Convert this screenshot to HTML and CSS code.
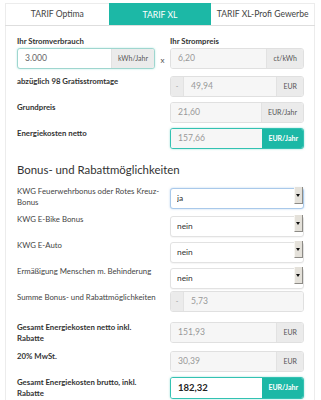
FILE: index.html
```html
<!DOCTYPE html>
<html>

	<head>
		<meta charset="UTF-8">
		<title>Tarifrechner</title>
		<link rel="stylesheet" href="styles.css">
	</head>

	<body>

		<div class="wrap">
			<div class="tabs">
				<div class="tab">TARIF Optima</div>
				<div class="tab active">TARIF XL</div>
				<div class="tab">TARIF XL-Profi Gewerbe</div>
			</div>

			<div class="card">
				<div class="top">
					<div class="lbl b">Ihr Stromverbrauch</div>
					<div></div>
					<div class="lbl b">Ihr Strompreis</div>

					<div class="ig focus">
						<div class="val dark">3.000</div>
						<div class="add">kWh/Jahr</div>
					</div>
					<div class="times">x</div>
					<div class="ig ro">
						<div class="val">6,20</div>
						<div class="add">ct/kWh</div>
					</div>
				</div>

				<div class="row">
					<div class="lbl b">abzüglich 98 Gratisstromtage</div>
					<div class="ig ro">
						<div class="pre">-</div>
						<div class="val">49,94</div>
						<div class="add">EUR</div>
					</div>
				</div>

				<div class="row">
					<div class="lbl b">Grundpreis</div>
					<div class="ig ro">
						<div class="val">21,60</div>
						<div class="add">EUR/Jahr</div>
					</div>
				</div>

				<div class="row">
					<div class="lbl b">Energiekosten netto</div>
					<div class="ig ro teal">
						<div class="val">157,66</div>
						<div class="add">EUR/Jahr</div>
					</div>
				</div>

				<h3>Bonus- und Rabattmöglichkeiten</h3>

				<div class="row first">
					<div class="lbl">KWG Feuerwehrbonus oder Rotes Kreuz-Bonus</div>
					<div class="sel focus">
						<select><option>ja</option><option>nein</option></select>
						<span class="arrow"></span>
					</div>
				</div>

				<div class="row">
					<div class="lbl">KWG E-Bike Bonus</div>
					<div class="sel">
						<select><option>nein</option><option>ja</option></select>
						<span class="arrow"></span>
					</div>
				</div>

				<div class="row">
					<div class="lbl">KWG E-Auto</div>
					<div class="sel">
						<select><option>nein</option><option>ja</option></select>
						<span class="arrow"></span>
					</div>
				</div>

				<div class="row">
					<div class="lbl">Ermäßigung Menschen m. Behinderung</div>
					<div class="sel">
						<select><option>nein</option><option>ja</option></select>
						<span class="arrow"></span>
					</div>
				</div>

				<div class="row">
					<div class="lbl">Summe Bonus- und Rabattmöglichkeiten</div>
					<div class="ig ro">
						<div class="pre">-</div>
						<div class="val">5,73</div>
					</div>
				</div>

				<div class="row sum1">
					<div class="lbl b">Gesamt Energiekosten netto inkl. Rabatte</div>
					<div class="ig ro">
						<div class="val">151,93</div>
						<div class="add">EUR</div>
					</div>
				</div>

				<div class="row sum2">
					<div class="lbl b">20% MwSt.</div>
					<div class="ig ro">
						<div class="val">30,39</div>
						<div class="add">EUR</div>
					</div>
				</div>

				<div class="row">
					<div class="lbl b">Gesamt Energiekosten brutto, inkl. Rabatte</div>
					<div class="ig teal total">
						<div class="val">182,32</div>
						<div class="add">EUR/Jahr</div>
					</div>
				</div>
			</div>
		</div>

	</body>

</html>
```

FILE: styles.css
```css
body {
	margin: 0;
	background-color: #fff;
	font-family: Lato, "Liberation Sans", sans-serif;
	color: #333;
}

.wrap {
	margin: 3px 6px 0 5px;
}

.tabs {
	display: flex;
	height: 22px;
	border-bottom: 1px solid #dedede;
}

.tab {
	flex: 1;
	text-align: center;
	line-height: 21px;
	font-size: 8.6px;
	color: #444;
	border-top: 1px solid #ececec;
}

.tab:first-child {
	border-left: 1px solid #ececec;
}

.tab:last-child {
	border-right: 1px solid #ececec;
}

.tab.active {
	background-color: #1cb8a6;
	border-top-color: #1cb8a6;
	color: #fff;
	line-height: 22px;
}

.card {
	border: 1px solid #ececec;
	border-top: 0;
	padding: 10px 10px 6px 11px;
}

.top {
	display: grid;
	grid-template-columns: 138px 15px 134px;
	row-gap: 1px;
}

.lbl {
	font-size: 7.8px;
	line-height: 11px;
	color: #444;
	padding-top: 1px;
	padding-right: 6px;
}

.lbl.b {
	font-weight: bold;
	color: #333;
	padding-top: 0;
	padding-right: 14px;
}

.times {
	font-size: 8px;
	color: #555;
	text-align: center;
	line-height: 21px;
	padding-top: 2px;
}

.row {
	display: grid;
	grid-template-columns: 1fr 134px;
	margin-top: 5px;
}

.row.first {
	margin-top: 0;
}

.row.sum1 {
	margin-top: 10px;
}

.row.sum2 {
	margin-top: 7px;
}

.ig {
	display: flex;
	height: 21px;
	box-sizing: border-box;
	border: 1px solid #e0e0e0;
	border-radius: 3px;
	overflow: hidden;
	background-color: #fff;
}

.ig .val {
	flex: 1;
	padding-left: 7px;
	font-size: 8.6px;
	line-height: 19px;
	color: #999;
}

.ig .val.dark {
	color: #666;
}

.ig.ro .val {
	background-color: #f6f6f6;
}

.ig .add,
.ig .pre {
	background-color: #ebebeb;
	color: #555;
	font-size: 7px;
	line-height: 19px;
	padding: 0 6px;
}

.ig .add {
	border-left: 1px solid #e2e2e2;
}

.ig .pre {
	padding: 0 4px;
	width: 4px;
	text-align: center;
	color: #999;
	border-right: 1px solid #e2e2e2;
}

.ig.focus {
	border-color: #9fd6cf;
	box-shadow: 0 0 2px rgba(28, 184, 166, 0.35);
}

.ig.teal {
	border-color: #33c2b2;
	box-shadow: 0 0 2px rgba(28, 184, 166, 0.5);
}

.ig.teal .add {
	background-color: #1cb8a6;
	border-left-color: #1cb8a6;
	color: #fff;
	font-weight: bold;
	padding: 0 5px;
}

.ig.total {
	height: 22px;
}

.ig.total .val {
	background-color: #fff;
	color: #222;
	font-weight: bold;
	font-size: 9.5px;
	line-height: 20px;
}

h3 {
	font-size: 11.4px;
	font-weight: normal;
	color: #333;
	line-height: 16px;
	margin: 13px 0 7px 0;
}

.sel {
	position: relative;
	height: 21px;
}

.sel select {
	-webkit-appearance: none;
	appearance: none;
	width: 100%;
	height: 21px;
	box-sizing: border-box;
	border: 1px solid #e2e2e2;
	border-radius: 3px;
	background-color: #fff;
	padding: 0 0 0 6px;
	font-family: Lato, "Liberation Sans", sans-serif;
	font-size: 8.4px;
	color: #333;
	box-shadow: 0 1px 1px rgba(0, 0, 0, 0.04);
}

.sel.focus select {
	border-color: #a9c9ea;
	box-shadow: 0 0 2px rgba(102, 160, 220, 0.5);
}

.sel .arrow {
	position: absolute;
	top: 2px;
	right: 1px;
	width: 7px;
	height: 16px;
	background-color: #e4e1da;
	border-left: 1px solid #f7f6f2;
	border-right: 1px solid #8d8b86;
	border-bottom: 1px solid #8d8b86;
}

.sel .arrow:after {
	content: "";
	position: absolute;
	left: 1px;
	top: 7px;
	border-left: 2.5px solid transparent;
	border-right: 2.5px solid transparent;
	border-top: 3px solid #111;
}
```
